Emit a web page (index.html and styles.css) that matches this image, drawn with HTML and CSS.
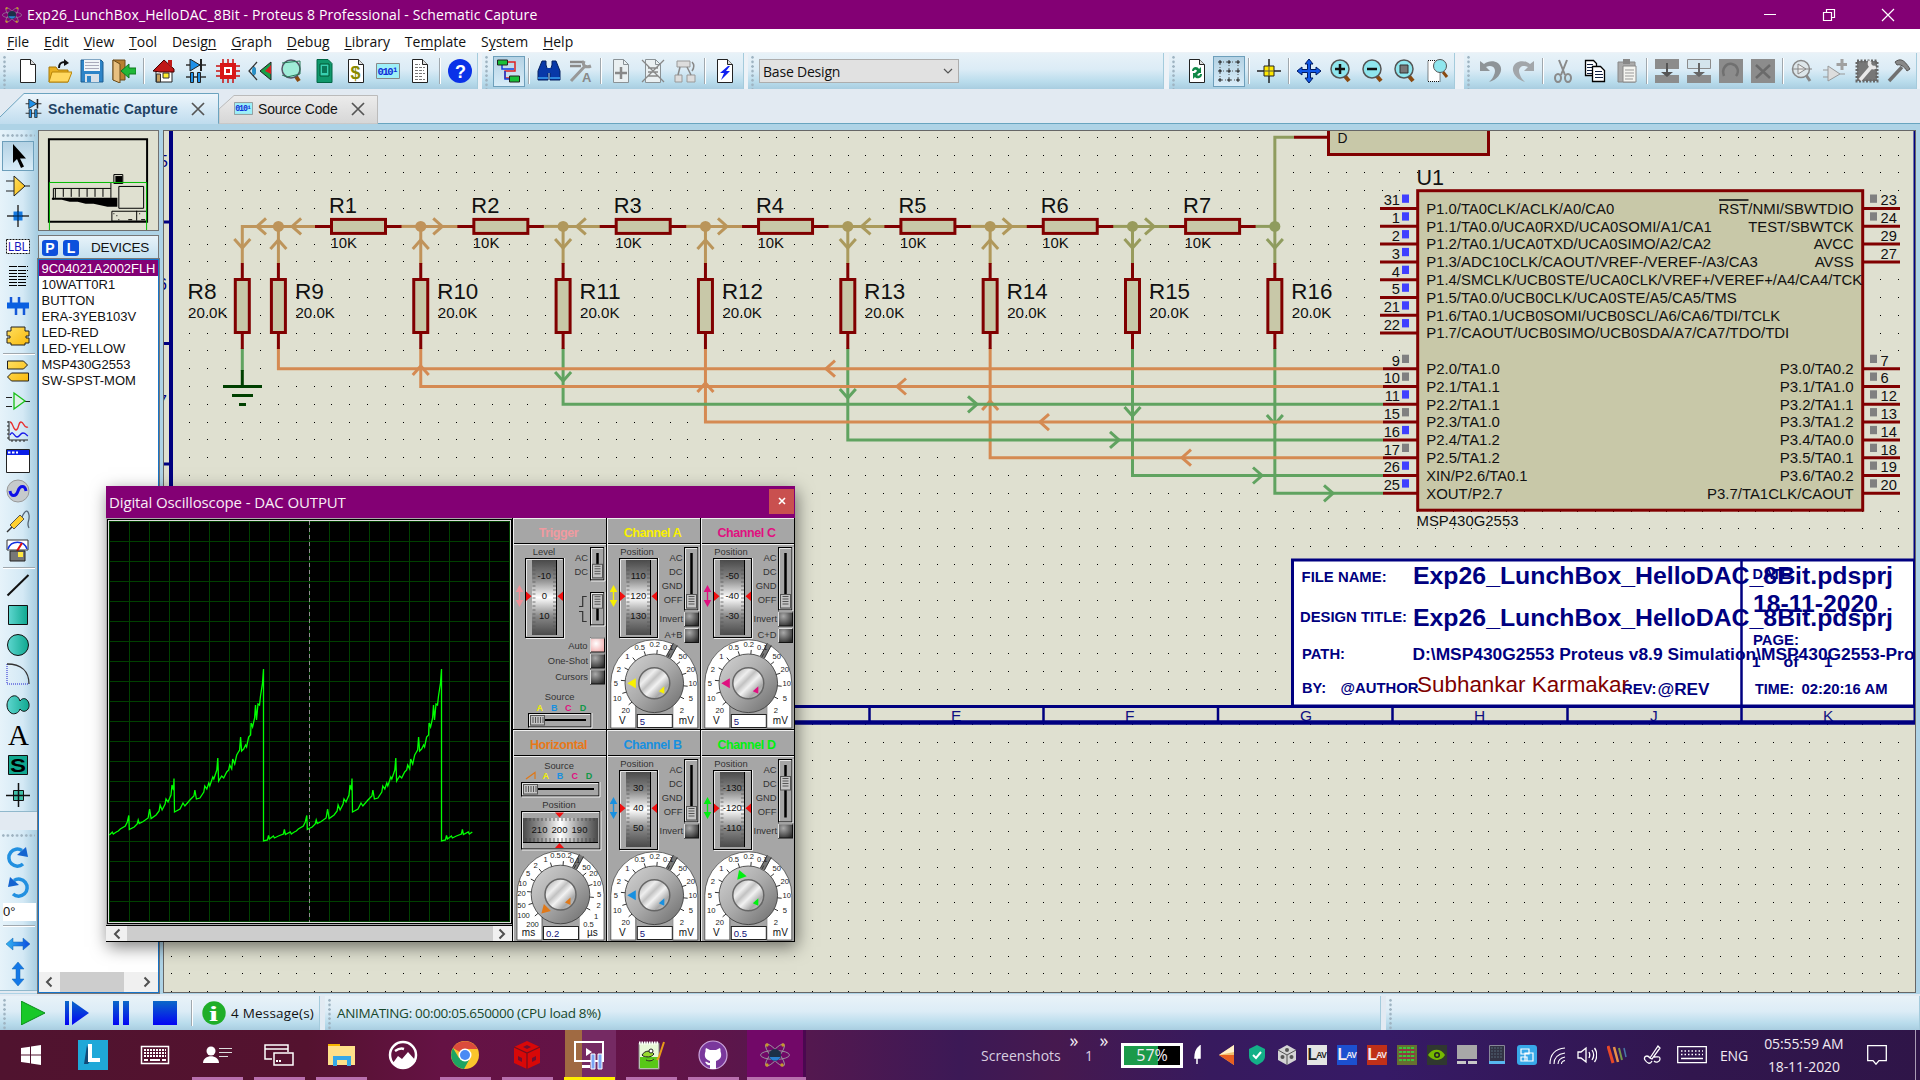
FILE: index.html
```html
<!DOCTYPE html>
<html lang="en">
<head>
<meta charset="utf-8">
<title>Exp26_LunchBox_HelloDAC_8Bit - Proteus 8 Professional - Schematic Capture</title>
<link rel="stylesheet" href="styles.css">
</head>
<body>
<svg class="defs" width="0" height="0">
  <defs>
    <linearGradient id="teal" x1="0" x2="1"><stop offset="0" stop-color="#5ed6cf"/><stop offset="1" stop-color="#0fa890"/></linearGradient>
    <linearGradient id="gold" x1="0" y1="0" x2="1" y2="1"><stop offset="0" stop-color="#ffdf60"/><stop offset="1" stop-color="#f8b90c"/></linearGradient>
    <linearGradient id="blueV" x1="0" y1="0" x2="0" y2="1"><stop offset="0" stop-color="#0a68c8"/><stop offset="1" stop-color="#0404f4"/></linearGradient>
    <linearGradient id="blueH"><stop offset="0" stop-color="#35b4f0"/><stop offset="1" stop-color="#0a4be0"/></linearGradient>
    <linearGradient id="drumV" x1="0" y1="0" x2="0" y2="1"><stop offset="0" stop-color="#4a4a4a"/><stop offset=".25" stop-color="#888"/><stop offset=".5" stop-color="#fff"/><stop offset=".75" stop-color="#888"/><stop offset="1" stop-color="#4a4a4a"/></linearGradient>
    <linearGradient id="drumH"><stop offset="0" stop-color="#4a4a4a"/><stop offset=".25" stop-color="#999"/><stop offset=".5" stop-color="#fff"/><stop offset=".75" stop-color="#999"/><stop offset="1" stop-color="#4a4a4a"/></linearGradient>
    <linearGradient id="knob" x1="0" y1="0" x2="1" y2="1"><stop offset="0" stop-color="#d4d4d4"/><stop offset=".5" stop-color="#a9a9a9"/><stop offset="1" stop-color="#6a6a6a"/></linearGradient>
    <linearGradient id="cap" x1="0" y1="0" x2="1" y2="1"><stop offset="0" stop-color="#999"/><stop offset=".3" stop-color="#eee"/><stop offset=".42" stop-color="#c2c2c2"/><stop offset=".55" stop-color="#f2f2f2"/><stop offset=".75" stop-color="#a8a8a8"/><stop offset="1" stop-color="#d8d8d8"/></linearGradient>
    <radialGradient id="btn" cx=".35" cy=".3" r=".8"><stop offset="0" stop-color="#aaa"/><stop offset="1" stop-color="#2a2a2a"/></radialGradient>
    <radialGradient id="btnOn" cx=".4" cy=".4" r=".8"><stop offset="0" stop-color="#fff"/><stop offset="1" stop-color="#eea0a0"/></radialGradient>
    <symbol id="page" viewBox="0 0 24 24"><path d="M4.500.500h10l5 5v18h-15z" fill="#fff" stroke="#222"/><path d="M14.500.500v5h5" fill="#ddd" stroke="#222"/></symbol>
    <symbol id="gpage" viewBox="0 0 24 24"><path d="M4.500.500h10l5 5v18h-15z" fill="#eaf0f2" stroke="#8a9296"/><path d="M14.500.500v5h5" fill="none" stroke="#8a9296"/></symbol>
    <symbol id="lens" viewBox="0 0 24 24"><path d="M15 16l5 6" stroke="#8a4a10" stroke-width="4"/><circle cx="11" cy="10" r="9" fill="#8fe6ee" stroke="#555" stroke-width="1.500"/></symbol>
    <symbol id="diode" viewBox="0 0 24 24"><path d="M2 6h20M2 18h20" stroke="#333" stroke-width="1.500"/><path d="M6 0v12l10-6z" fill="#1e90e8" stroke="#222"/><path d="M17 0v12" stroke="#222" stroke-width="2"/><path d="M6.500 13.500h3v10h-3zM13.500 13.500h3v10h-3z" fill="#1e90e8" stroke="#222"/></symbol>
    <symbol id="code" viewBox="0 0 24 24"><path d="M.500 4.500h23v15h-23z" fill="#9deff8" stroke="#888"/><text x="1.500" y="15.500" font-family="Liberation Mono" font-weight="700" font-size="10.500" fill="#1030d8" textLength="21">010¹</text></symbol>
    <symbol id="atom" viewBox="0 0 30 30"><g fill="none" stroke="#9a9aa0" stroke-width=".900"><ellipse cx="15" cy="15" rx="14.500" ry="4.500"/><ellipse cx="15" cy="15" rx="14" ry="4" transform="rotate(50 15 15)"/><ellipse cx="15" cy="15" rx="14" ry="4" transform="rotate(-50 15 15)"/></g><circle cx="15" cy="15" r="6" fill="#1c3048"/><path d="M9.500 17a6 6 0 0 0 11 0z" fill="#2a80d0"/><g fill="#c8962a"><circle cx="7" cy="5" r="1.700"/><circle cx="23" cy="5" r="1.700"/><circle cx="7" cy="25" r="1.700"/><circle cx="22" cy="25" r="1.700"/></g></symbol>
  </defs>
</svg>

<div class="app">
  <header class="titlebar">
    <svg class="appicon" viewBox="0 0 30 30"><use href="#atom"/></svg>
    <h1>Exp26_LunchBox_HelloDAC_8Bit - Proteus 8 Professional - Schematic Capture</h1>
    <div class="winbtns">
      <svg viewBox="0 0 14 14"><path d="M1 6.500h12" stroke="#fff"/></svg>
      <svg viewBox="0 0 14 14"><path d="M1.500 4.500h8v8h-8zM4.500 4.500v-3h8v8h-3" fill="none" stroke="#fff" stroke-width="1.200"/></svg>
      <svg viewBox="0 0 14 14"><path d="M1 1l12 12M13 1l-12 12" stroke="#fff" stroke-width="1.200"/></svg>
    </div>
  </header>

  <nav class="menubar">
    <span><u>F</u>ile</span><span><u>E</u>dit</span><span><u>V</u>iew</span><span><u>T</u>ool</span><span>Desig<u>n</u></span><span><u>G</u>raph</span><span><u>D</u>ebug</span><span><u>L</u>ibrary</span><span>Te<u>m</u>plate</span><span>S<u>y</u>stem</span><span><u>H</u>elp</span>
  </nav>

  <div class="toolbar">
    <div class="group g1">
      <i><svg viewBox="0 0 24 24"><use href="#page"/></svg></i>
      <i><svg viewBox="0 0 24 24"><path d="M1 23V8h7l2 3h10v12z" fill="#e8b020" stroke="#a87808"/><path d="M1 23l3-10h20l-4 10z" fill="#ffd860" stroke="#b88408"/><path d="M11 9c0-5 2-6 6-6" fill="none" stroke="#111" stroke-width="2"/><path d="M16 0l5 4-5 3z" fill="#111"/></svg></i>
      <i><svg viewBox="0 0 24 24"><path d="M1 1h20l2 2v20H1z" fill="#2d84c8" stroke="#1c5c90"/><path d="M4 1h16v11H4z" fill="#f0f4f8"/><path d="M5 3.500h14M5 6.500h14M5 9.500h14" stroke="#aab"/><path d="M5 15h14v8H5z" fill="#d8e0e8"/><path d="M7 17h4v6H7z" fill="#2d84c8"/></svg></i>
      <i><svg viewBox="0 0 24 24"><path d="M1 1h12v20H1z" fill="#b88030" stroke="#6a4a18"/><path d="M1 1l7 4v19l-7-3z" fill="#e8c080" stroke="#6a4a18"/><path d="M24 9h-7V5l-8 7 8 7v-4h7z" fill="#20b838" stroke="#107820"/></svg></i>
      <b></b>
      <i><svg viewBox="0 0 24 24"><path d="M4 12v11h16V10z" fill="#fff" stroke="#222"/><path d="M1 12L12 1l10 9v3h-14z" fill="#c01818" stroke="#400"/><path d="M16 1h4v7l-4-3z" fill="#c01818"/><path d="M4.500 15h4v8h-4z" fill="#c8a060" stroke="#333"/><path d="M11 14h6v5h-6z" fill="#ffee30" stroke="#333"/></svg></i>
      <i><svg viewBox="0 0 24 24"><use href="#diode"/></svg></i>
      <i><svg viewBox="0 0 24 24"><path d="M7 0v24M12 0v24M17 0v24M0 7h24M0 12h24M0 17h24" stroke="#c81010" stroke-width="1.500"/><path d="M4 4h16v16H4z" fill="#d81818"/><path d="M8 8h8v8H8z" fill="#fff"/><path d="M10 10h4v4h-4z" fill="#d81818"/></svg></i>
      <i><svg viewBox="0 0 24 24"><path d="M12 12L23 3v18z" fill="#18a048" stroke="#222"/><path d="M17 12l6-6v9z" fill="#d82020"/><path d="M9 3L1 12l8 9M5 7c3 2 3 8 0 10" fill="none" stroke="#333" stroke-width="1.300"/><ellipse cx="6" cy="12" rx="2" ry="4" fill="#2890c8"/></svg></i>
      <i><svg viewBox="0 0 24 24"><path d="M15 16l4 6" stroke="#8a4a10" stroke-width="4"/><circle cx="11" cy="10" r="9" fill="#a0ecd8" stroke="#556" stroke-width="1.500"/><path d="M2 4l18-2M2 16l5 2 13-3M20 2v13" fill="none" stroke="#287858"/></svg></i>
      <i><svg viewBox="0 0 24 24"><path d="M5 .500h11l4 4v19H5z" fill="#10986c" stroke="#064"/><path d="M8 5h9v12H8z" fill="#38d0b0" stroke="#053"/><path d="M10 7h5v7h-5z" fill="#0a7858"/></svg></i>
      <i><svg viewBox="0 0 24 24"><use href="#page"/><text x="6.500" y="20" font-family="Liberation Sans" font-weight="700" font-size="18" fill="#8a8a00">$</text></svg></i>
      <i><svg viewBox="0 0 24 24"><use href="#code"/></svg></i>
      <i><svg viewBox="0 0 24 24"><use href="#page"/><path d="M7 5.500h5M7 8.500h10M7 11.500h9M7 14.500h10M7 17.500h8M7 20.500h10" stroke="#777" stroke-dasharray="3 1"/></svg></i>
      <b></b>
      <i><svg viewBox="0 0 24 24"><circle cx="12" cy="12" r="12" fill="#0b32e8"/><text x="7" y="18.500" font-family="Liberation Sans" font-weight="700" font-size="18" fill="#fff">?</text></svg></i>
    </div>
    <div class="group g2">
      <i class="on"><svg viewBox="0 0 24 24"><path d="M11 3h7v9H8v7h5" fill="none" stroke="#e02020" stroke-width="1.500"/><path d="M5 6v4h12M8 12v8h5" fill="none" stroke="#1040e0" stroke-width="1.500"/><path d="M.500 1h10v5H.500zM12.500 17h10v6h-10z" fill="#18c038" stroke="#222"/></svg></i>
      <b></b>
      <i><svg viewBox="0 0 24 24"><path d="M5 2h4v4l2 6v9H1V12zM15 2h4l4 10v9H13v-9l2-6z" fill="#0838a8" stroke="#042060"/><path d="M10 9h4v5h-4z" fill="#0838a8"/><path d="M1 19h10M13 19h10" stroke="#38a0f0" stroke-width="1.500"/></svg></i>
      <i><svg viewBox="0 0 24 24"><path d="M1 3h14M1 7h11" stroke="#8a8a8a" stroke-width="2.500"/><path d="M2 22L17 6M15 2c-2 5 2 7 7 5" fill="none" stroke="#989898" stroke-width="3"/><text x="13" y="23" font-family="Liberation Sans" font-weight="700" font-size="13" fill="#888">A</text></svg></i>
      <b></b>
      <i><svg viewBox="0 0 24 24"><use href="#gpage"/><path d="M12 8v12M6 14h12" stroke="#888" stroke-width="2.500"/></svg></i>
      <i><svg viewBox="0 0 24 24"><use href="#gpage"/><path d="M7 9h10M7 13h10M7 17h10M1 1l22 22M23 1L1 23" stroke="#888" stroke-width="1.300"/></svg></i>
      <i><svg viewBox="0 0 24 24"><path d="M4 2h13v6H4zM2 16h7v7H2zM14 16h8v7h-8z" fill="#ddd" stroke="#999"/><path d="M7 8l-2 8M14 8l4 8M19 3c3 3 2 6 0 9" fill="none" stroke="#888" stroke-width="1.500"/></svg></i>
      <b></b>
      <i><svg viewBox="0 0 24 24"><use href="#page"/><path d="M15 7l-8 7h4l-3 7 9-9h-4l4-5z" fill="#1020f0"/></svg></i>
    </div>
    <div class="group g3"><div class="select">Base Design<svg viewBox="0 0 10 6"><path d="M1 1l4 4 4-4" fill="none" stroke="#555" stroke-width="1.200"/></svg></div></div>
    <div class="group g4">
      <i><svg viewBox="0 0 24 24"><use href="#page"/><path d="M7 12c0-5 6-5 7-2l2-2v6h-6l2-2c-1-2-3-1-3 0zM17 15c0 5-6 5-7 3l-2 2v-6h6l-2 2c1 1 3 1 3-1z" fill="#108848"/></svg></i>
      <i class="on"><svg viewBox="0 0 24 24"><path d="M3 3h18v18H3zM12 3v18M3 12h18" fill="none" stroke="#555" stroke-dasharray="1 2"/><path d="M1 3h4M3 1v4M10 3h4M12 1v4M19 3h4M21 1v4M1 12h4M3 10v4M10 12h4M12 10v4M19 12h4M21 10v4M1 21h4M3 19v4M10 21h4M12 19v4M19 21h4M21 19v4" stroke="#222"/></svg></i>
      <b></b>
      <i><svg viewBox="0 0 24 24"><path d="M12 0v24M0 12h24" stroke="#222" stroke-width="1.500"/><path d="M7 7h10v10H7z" fill="#ffe800" stroke="#222"/><path d="M12 7v10M7 12h10" stroke="#554"/></svg></i>
      <b></b>
      <i><svg viewBox="0 0 24 24"><path d="M12 0l4 5h-2.500v5.500H19V8l5 4-5 4v-2.500h-5.500V19H16l-4 5-4-5h2.500v-5.500H5V16l-5-4 5-4v2.500h5.500V5H8z" fill="#1058e8" stroke="#001a60"/></svg></i>
      <i><svg viewBox="0 0 24 24"><use href="#lens"/><path d="M11 5v10M6 10h10" stroke="#111" stroke-width="2.500"/></svg></i>
      <i><svg viewBox="0 0 24 24"><use href="#lens"/><path d="M6 10h10" stroke="#111" stroke-width="2.500"/></svg></i>
      <i><svg viewBox="0 0 24 24"><use href="#lens"/><path d="M7 6h8v8H7z" fill="#777" stroke="#333"/></svg></i>
      <i><svg viewBox="0 0 24 24"><path d="M3 1.500h12v21H3z" fill="#fff" stroke="#111" stroke-dasharray="1 1"/><path d="M18 13l4 5" stroke="#8a4a10" stroke-width="3"/><circle cx="15" cy="7" r="6.500" fill="#8fe6ee" stroke="#555"/></svg></i>
    </div>
    <div class="group g5">
      <i><svg viewBox="0 0 24 24"><path d="M1 2v10h10L7 8c7-3 11 2 8 8-1 3-3 5-5 7 8-2 13-9 12-14C21 2 11 0 5 5z" fill="#8e9498"/></svg></i>
      <i><svg viewBox="0 0 24 24"><path d="M23 2v10H13l4-4c-7-3-11 2-8 8 1 3 3 5 5 7C6 21 1 14 2 9 3 2 13 0 19 5z" fill="#a2a6aa"/></svg></i>
      <b></b>
      <i><svg viewBox="0 0 24 24"><path d="M8 1l6 15M16 1l-6 15" stroke="#8a8a8a" stroke-width="2"/><g fill="none" stroke="#8a8a8a" stroke-width="2"><ellipse cx="7" cy="19" rx="3" ry="4"/><ellipse cx="17" cy="19" rx="3" ry="4"/></g></svg></i>
      <i><svg viewBox="0 0 24 24"><path d="M2.500 1.500h8l3 3v12h-11z" fill="#fff" stroke="#000" stroke-width="1.300"/><path d="M4 5.500h6M4 8.500h5M4 11.500h5M4 14.500h5" stroke="#124"/><path d="M9.500 7.500h8l4 4v11h-12z" fill="#fff" stroke="#000" stroke-width="1.300"/><path d="M12 12.500h7M12 15.500h8M12 18.500h8" stroke="#124"/></svg></i>
      <i><svg viewBox="0 0 24 24"><path d="M3 3h17v20H3z" fill="#aaa" stroke="#888"/><path d="M8 0h7v5H8z" fill="#888"/><path d="M8 7h13v16H8z" fill="#f4f4f0" stroke="#888"/><path d="M10 11h9M10 14h9M10 17h9M10 20h8" stroke="#999"/></svg></i>
      <b></b>
      <i><svg viewBox="0 0 24 24"><path d="M0 0h24v10H0zM0 16h24v8H0z" fill="#8c8c8c"/><path d="M11 4h2v9h5l-6 5-6-5h5z" fill="#555"/></svg></i>
      <i><svg viewBox="0 0 24 24"><path d="M.500.500h23v9H.500z" fill="#d4e4ec" stroke="#8c8c8c"/><path d="M0 16h24v8H0z" fill="#8c8c8c"/><path d="M11 4h2v9h5l-6 5-6-5h5z" fill="#666"/></svg></i>
      <i><svg viewBox="0 0 24 24"><path d="M0 0h24v24H0z" fill="#8c8c8c"/><path d="M5 17c-3-8 3-13 8-12s8 7 4 12" fill="none" stroke="#707070" stroke-width="2.500"/></svg></i>
      <i><svg viewBox="0 0 24 24"><path d="M0 0h24v24H0z" fill="#8c8c8c"/><path d="M5 6l14 13M19 6L5 19" stroke="#6a6a6a" stroke-width="2.500"/></svg></i>
      <b></b>
      <i><svg viewBox="0 0 24 24"><path d="M15 16l4 6" stroke="#888" stroke-width="3"/><circle cx="10" cy="10" r="8.500" fill="#dde6ea" stroke="#888" stroke-width="1.500"/><path d="M7 5v10l8-5zM1 10h20" fill="#eee" stroke="#888"/></svg></i>
      <i><svg viewBox="0 0 24 24"><path d="M5 7v15l12-7zM0 11h5M0 18h5M17 15h5" fill="#ddd" stroke="#999"/><path d="M19 0v11M13.500 5.500h11" stroke="#a0a0a0" stroke-width="3"/></svg></i>
      <i><svg viewBox="0 0 24 24"><path d="M2 2h20v20H2z" fill="#777" stroke="#666" stroke-width="3" stroke-dasharray="2 1.500"/><path d="M5 21L17 7M15 2c-2 4 2 8 6 6" fill="none" stroke="#e8e8e8" stroke-width="3.500"/></svg></i>
      <i><svg viewBox="0 0 24 24"><path d="M2 22L15 8" stroke="#707070" stroke-width="3.500"/><path d="M8 3c5-4 9-3 15 7l-3 2c-3-5-7-7-10-6z" fill="#888" stroke="#555"/></svg></i>
    </div>
  </div>

  <div class="tabs">
    <svg class="tabshape" viewBox="0 0 380 35"><defs><linearGradient id="ta" x1="0" y1="0" x2="0" y2="1"><stop offset="0" stop-color="#eef6fc"/><stop offset="1" stop-color="#bfdcee"/></linearGradient><linearGradient id="tg" x1="0" y1="0" x2="0" y2="1"><stop offset="0" stop-color="#ececec"/><stop offset="1" stop-color="#d6d6d6"/></linearGradient></defs><path d="M219 20L234 6.500H377.500V35H219z" fill="url(#tg)" stroke="#bbb"/><path d="M-1 29L24 4.500H218.500V35H-1z" fill="url(#ta)"/><path d="M-1 29L24 4.500H218.500V34.500" fill="none" stroke="#6ba3bf"/></svg>
    <div class="tab active"><svg viewBox="0 0 24 24"><use href="#diode"/></svg><span>Schematic Capture</span><svg class="x" viewBox="0 0 14 14"><path d="M1 1l12 12M13 1L1 13" stroke="#555" stroke-width="1.700"/></svg></div>
    <div class="tab"><svg viewBox="0 0 24 24"><use href="#code"/></svg><span>Source Code</span><svg class="x" viewBox="0 0 14 14"><path d="M1 1l12 12M13 1L1 13" stroke="#555" stroke-width="1.700"/></svg></div>
  </div>

  <main>
    <aside class="modes">
      <div class="modegroup">
        <i class="on"><svg viewBox="0 0 24 24"><path d="M7 0v19l4-4 4 9 3-1.500-4-8h6z" fill="#000"/></svg></i>
        <i><svg viewBox="0 0 24 24"><path d="M0 7h8M0 17h8M18 12h6" stroke="#222"/><path d="M8 2v20l11-10z" fill="url(#gold)" stroke="#222"/></svg></i>
        <i><svg viewBox="0 0 24 24"><path d="M12 1v22M1 12h22" stroke="#333" stroke-width="1.500"/><path d="M7.500 7.500h9v9h-9z" fill="#1478e0"/><path d="M12 7v10M7 12h10" stroke="#024"/></svg></i>
        <i><svg viewBox="0 0 24 24"><path d="M.500 5.500h23v14H.500z" fill="#fff" stroke="#111" stroke-dasharray="2 1"/><text x="2" y="17" font-family="Liberation Sans" font-size="12" textLength="20" lengthAdjust="spacingAndGlyphs" fill="#1414c0">LBL</text></svg></i>
        <i><svg viewBox="0 0 24 24"><path d="M3 2.500h19M3 6.500h19M3 9.500h18M3 12.500h19M3 15.500h18M3 18.500h18M3 21.500h18" stroke="#000" stroke-dasharray="8 1"/></svg></i>
        <i><svg viewBox="0 0 24 24"><path d="M5 3v9M13 3v9M10 12v9M18 12v9" stroke="#1458d8" stroke-width="2.500"/><path d="M1 8.500h22v6H1z" fill="#0a60e0"/></svg></i>
        <i><svg viewBox="0 0 24 24"><path d="M5 3h14v4h4v5h-3v2h3v5h-4v2H5v-2H1v-5h3v-2H1V7h4z" fill="url(#gold)" stroke="#222"/></svg></i>
        <b></b>
        <i><svg viewBox="0 0 24 24"><path d="M1.500 2h16l4 4-4 4h-16zM22.500 14h-17l-4 4 4 4h17z" fill="url(#gold)" stroke="#222"/></svg></i>
        <i><svg viewBox="0 0 24 24"><path d="M0 8.500h6M0 17.500h6M18 12.500h6" stroke="#222"/><path d="M8 4v16l11-8z" fill="#dff0e8" stroke="#18c018" stroke-width="1.300"/></svg></i>
        <i><svg viewBox="0 0 24 24"><path d="M3 2v19h19M1 3h2M1 7h2M1 11h2M1 15h2M1 19h2M6 21v2M10 21v2M14 21v2M18 21v2" fill="none" stroke="#222"/><path d="M4 3c3 0 3 8 6 8s2-8 5-8 3 7 7 5" fill="none" stroke="#e83030" stroke-width="1.300"/><path d="M4 16c3-6 4 2 7 2s3-4 6-4 3 2 5 3" fill="none" stroke="#1818e8" stroke-width="1.300"/></svg></i>
        <i><svg viewBox="0 0 24 24"><path d="M.500.500h23v23H.500z" fill="#fff" stroke="#222"/><path d="M1 1h22v5H1z" fill="#0a1ee8"/><path d="M2 3.500h10" stroke="#fff" stroke-width="2" stroke-dasharray="2.500 1.500"/></svg></i>
        <i><svg viewBox="0 0 24 24"><circle cx="12" cy="12" r="11" fill="#c6cacc" stroke="#999"/><path d="M4 12c1 6 6 6 8 0s7-6 8 0" fill="none" stroke="#1010e8" stroke-width="3"/></svg></i>
        <i><svg viewBox="0 0 24 24"><path d="M1 23l5-5" stroke="#333" stroke-width="1.500"/><path d="M4 16L14 6l4 4L8 20z" fill="#ffd030" stroke="#555"/><path d="M16 8c3-7 6-8 7-2s-3 8 0 13" fill="none" stroke="#567" stroke-width="1.300"/></svg></i>
        <i><svg viewBox="0 0 24 24"><path d="M1 1h21v10H1z" fill="#fff" stroke="#333"/><path d="M2 10c3-9 16-9 19 0" fill="none" stroke="#1030e0" stroke-width="1.500"/><path d="M11 12l5-8" stroke="#e01010" stroke-width="2"/><path d="M4 12h15v10H4z" fill="#777" stroke="#222"/><path d="M12 13h5v5h-5z" fill="#ffe840"/></svg></i>
        <b class="tight"></b>
        <i><svg viewBox="0 0 24 24"><path d="M1.500 22.500L22.500 2" stroke="#111" stroke-width="2"/></svg></i>
        <i><svg viewBox="0 0 24 24"><path d="M2.500 2.500h19v19h-19z" fill="url(#teal)" stroke="#111"/></svg></i>
        <i><svg viewBox="0 0 24 24"><circle cx="12" cy="12" r="10.500" fill="url(#teal)" stroke="#111"/></svg></i>
        <i><svg viewBox="0 0 24 24"><path d="M1 1v20h22" fill="none" stroke="#2020d0" stroke-dasharray="1 1"/><path d="M1 1c14 0 22 7 22 20" fill="none" stroke="#333" stroke-width="1.300"/></svg></i>
        <i><svg viewBox="0 0 24 24"><path d="M14 8c2-3 5-3 7-1s3 6 1 9-6 3-8 0c-1 4-6 6-9 4s-4-5-4-8 2-8 6-9 6 2 7 5z" fill="url(#teal)" stroke="#111"/></svg></i>
        <i><svg viewBox="0 0 24 24"><text x="2" y="21.500" font-family="Liberation Serif" font-size="29">A</text></svg></i>
        <i><svg viewBox="0 0 24 24"><path d="M2.500 2.500h19v19h-19z" fill="#10a890" stroke="#111"/><text x="4" y="18.700" font-family="Liberation Sans" font-weight="700" font-size="19" textLength="16" lengthAdjust="spacingAndGlyphs">S</text></svg></i>
        <i><svg viewBox="0 0 24 24"><path d="M7.500 7.500h10v10h-10z" fill="#40c0a8" stroke="#111"/><path d="M12.500 0v24M0 12.500h24" stroke="#111" stroke-width="1.500"/></svg></i>
      </div>
      <div class="modegroup rot">
        <i><svg viewBox="0 0 24 24"><path d="M16 4.500A8.500 8.500 0 1 0 17 18" fill="none" stroke="#2290e0" stroke-width="3.500"/><path d="M11 9L20 1l2 10z" fill="#1464d0"/></svg></i>
        <i><svg viewBox="0 0 24 24"><path d="M8 4.500A8.500 8.500 0 1 1 7 18" fill="none" stroke="#2290e0" stroke-width="3.500"/><path d="M13 9L4 1 2 11z" fill="#1464d0"/></svg></i>
        <div class="angle">0°</div>
        <b></b>
        <i><svg viewBox="0 0 24 24"><path d="M0 12l7-6v4h10V6l7 6-7 6v-4H7v4z" fill="url(#blueH)" stroke="#1468b0" stroke-width=".500"/></svg></i>
        <i><svg viewBox="0 0 24 24"><path d="M12 0l6 7h-4v10h4l-6 7-6-7h4V7H6z" fill="#1478e8" stroke="#1468b0" stroke-width=".500"/></svg></i>
      </div>
    </aside>

    <section class="library">
      <svg class="preview" viewBox="39 131 120 99">
        <path d="M49 139h99v83H49z" fill="none" stroke="#000" stroke-width="2"/>
        <path d="M53.500 200V188.500h58M55.500 189v9M63.500 189v8M71.500 189v8M79.500 189v8M87.500 189v8M95.500 189v8M103.500 189v8M111.500 183v15" stroke="#000" fill="none"/>
        <path d="M52 198h66v2H52zM62 200h56v2H70zM78 202h40v2H86zM94 204h24v3h-10z" fill="#000"/>
        <path d="M114.500 174.500h9v9h-9z" fill="#dfe0d0" stroke="#000"/><path d="M116 176h7v6h-7z"/>
        <path d="M119.500 186.500h25v22h-25zM112.500 211.500h35v10h-35zM137.500 211v10" fill="none" stroke="#000"/>
        <path d="M114 214h1M117 216h1M119 220h1M129 220h4M140 214h1M142 220h4" stroke="#000"/>
        <path d="M49.500 231V182.500h98V231" fill="none" stroke="#0b0"/>
      </svg>
      <div class="devhead"><em>P</em><em>L</em><span>DEVICES</span></div>
      <div class="devlist">
        <ul><li class="sel">9C04021A2002FLH</li><li>10WATT0R1</li><li>BUTTON</li><li>ERA-3YEB103V</li><li>LED-RED</li><li>LED-YELLOW</li><li>MSP430G2553</li><li>SW-SPST-MOM</li></ul>
        <div class="hscroll"><svg viewBox="0 0 8 12"><path d="M6.500 1.500L2 6l4.500 4.500"/></svg><span class="thumb"></span><svg viewBox="0 0 8 12"><path d="M1.500 1.500L6 6l-4.500 4.500"/></svg></div>
      </div>
    </section>

    <svg id="sheet" viewBox="163 130 1753 863"></svg>
  </main>

  <div class="simbar">
    <div class="group s1">
      <svg viewBox="0 0 24 24"><path d="M0 0l24 12L0 24z" fill="#18c828" stroke="#0a8a18"/></svg>
      <svg viewBox="0 0 24 24"><path d="M0 0h4v24H0zM7 0l17 12L7 24z" fill="url(#blueV)"/></svg>
      <svg viewBox="0 0 24 24"><path d="M4 0h6v24H4zM14 0h6v24h-6z" fill="url(#blueV)"/></svg>
      <svg viewBox="0 0 24 24"><path d="M0 0h24v24H0z" fill="url(#blueV)"/></svg>
      <b></b>
      <svg class="info" viewBox="0 0 24 24"><circle cx="12" cy="12" r="11.700" fill="#1fae28"/><text x="7" y="20" font-family="Liberation Serif" font-weight="700" font-size="22" textLength="9" lengthAdjust="spacingAndGlyphs" fill="#fff">i</text></svg>
      <span>4 Message(s)</span>
    </div>
    <div class="group s2"><span>ANIMATING: 00:00:05.650000 (CPU load 8%)</span></div>
    <div class="group s3"></div>
  </div>

  <footer class="taskbar">
    <div class="apps">
      <i><svg viewBox="0 0 20 20"><path d="M0 3l9-1.300v7.800H0zM10 1.500L20 0v9.500H10zM0 10.500h9v7.800L0 17zM10 10.500h10V20l-10-1.500z" fill="#fff"/></svg></i>
      <i><svg class="w30" viewBox="0 0 30 30"><path d="M0 0h30v30H0z" fill="#1fa8d8"/><path d="M9 5L6 24h4l3-4z" fill="#124a78"/><path d="M10 4v18h12v-4h-8V4z" fill="#fff"/></svg></i>
      <i><svg class="w30" viewBox="0 0 30 30"><path d="M1.500 6.500h27v17h-27z" fill="none" stroke="#fff" stroke-width="1.500"/><path d="M4 10h22M4 13h22M4 16h22" stroke="#fff" stroke-width="2" stroke-dasharray="2 1"/><path d="M4 20h4M10 20h10M22 20h4" stroke="#fff" stroke-width="2"/></svg></i>
      <i class="run"><svg class="w30" viewBox="0 0 30 30"><circle cx="9" cy="11" r="4.500" fill="#fff"/><path d="M1 23c0-9 16-9 16 0z" fill="#fff"/><path d="M17 8.500h13M17 12.500h13M17 16.500h9" stroke="#ddd"/></svg></i>
      <i class="run"><svg class="w30" viewBox="0 0 30 30"><path d="M8 19H1V5h23v7M1 9h23M10 13h19v12H10z" fill="none" stroke="#fff" stroke-width="1.500"/><path d="M12 21h5" stroke="#fff" stroke-dasharray="2 1" stroke-width="2"/></svg></i>
      <i class="run"><svg class="w30" viewBox="0 0 30 30"><path d="M2 4h12v4H2z" fill="#f5b301"/><path d="M2 6h27v19H2z" fill="#ffe08a"/><path d="M7 26V16h18v10h-4v-6H11v6z" fill="#36a8e8"/></svg></i>
      <i><svg class="w30" viewBox="0 0 30 30"><circle cx="15" cy="15" r="13" fill="none" stroke="#fff" stroke-width="2.500"/><path d="M5 23l5-7 4 3 6-7 8 9-6 6H10z" fill="#fff"/><path d="M7 11c3-2 6-3 9-2" stroke="#fff" stroke-width="2.500" fill="none"/></svg></i>
      <i class="run"><svg class="w28" viewBox="0 0 28 28"><circle cx="14" cy="14" r="14" fill="#fbc52c"/><path d="M14 14L1.900 7A14 14 0 0 1 26.500 8H14z" fill="#db4b3c"/><path d="M14 14l-6 3L2 7A14 14 0 0 0 13 28l5-9z" fill="#1da462"/><circle cx="14" cy="14" r="6.500" fill="#fff"/><circle cx="14" cy="14" r="5" fill="#4a8af4"/></svg></i>
      <i class="run"><svg class="w28" viewBox="0 0 28 28"><path d="M14 0l13 6v16l-13 6-13-6V6z" fill="#d80808"/><path d="M1 6l13 6 13-6M14 12v16" fill="none" stroke="#701020" stroke-width="1.200"/><path d="M10 6l4-2 4 2-4 2zM5 15l4 2v4l-4-2zM19 17l4-2v4l-4 2z" fill="#701030"/></svg></i>
      <i class="run cap"><svg class="w30" viewBox="0 0 30 30"><path d="M1 2h28v19H1z" fill="none" stroke="#fff" stroke-width="2"/><path d="M12 8v8l6-4zM8 25h8v3H8z" fill="#fff"/><path d="M17 14h4v15h-4zM24 14h4v15h-4z" fill="#7aa4f4" stroke="#fff"/></svg></i>
      <i class="run"><svg class="w30" viewBox="0 0 30 30"><path d="M3 3h20v26H3z" fill="#e8f8d8" stroke="#888"/><path d="M4 17h18v11H4z" fill="#58c818"/><path d="M3 3h20" stroke="#fff" stroke-width="3" stroke-dasharray="1.500 1"/><path d="M6 15c3-5 9-5 12-1-3 4-8 3-11 2zM10 20c4 2 7 0 8-1" fill="#98d830" stroke="#222"/><circle cx="15" cy="11" r="2" fill="#fff" stroke="#222"/><path d="M28 2l-5 15-2 3" stroke="#e89a18" stroke-width="2" fill="none"/></svg></i>
      <i class="run"><svg class="w30" viewBox="0 0 30 30"><circle cx="15" cy="15" r="14" fill="#7a389c" stroke="#cda8dd" stroke-width="1.200"/><path d="M8 8l4 2h6l4-2c1 2 0 3 1 5 1 5-2 7-5 8v8h-6v-4c-3 1-4-2-5-3 3-1 2 1 5 1v-2c-3-1-6-3-5-8 1-2 0-3 1-5z" fill="#fff"/></svg></i>
      <i class="run now"><svg class="w30" viewBox="0 0 30 30"><use href="#atom"/></svg></i>
    </div>
    <div class="tray">
      <span class="lbl t1">Screenshots</span><span class="chev">»</span><span class="lbl t2">1</span><span class="chev c2">»</span>
      <div class="battery"><span>57%</span></div>
      <i class="plug"><svg viewBox="0 0 20 20"><path d="M12 1c-4 3-5 7-5 12h5zM9 13v6" fill="#fff" stroke="#fff" stroke-width="1.500"/></svg></i>
      <i><svg viewBox="0 0 20 20"><path d="M2 10L17 0v20z" fill="#f0c070"/><path d="M2 10L17 0v7z" fill="#fff0c8"/><path d="M2 10l15 0v10z" fill="#e86020"/></svg></i>
      <i><svg viewBox="0 0 20 20"><path d="M10 0l8 4v7c0 5-4 7-8 9-4-2-8-4-8-9V4z" fill="#14b088"/><path d="M6 10l3 3 5-6" fill="none" stroke="#fff" stroke-width="2"/></svg></i>
      <i><svg viewBox="0 0 20 20"><path d="M10 0l9 5v10l-9 5-9-5V5z" fill="#d4d4d4"/><path d="M1 5l9 5 9-5M10 10v10" fill="none" stroke="#555"/><circle cx="10" cy="5" r="2" fill="#555"/><circle cx="5.500" cy="12" r="2" fill="#555"/><circle cx="14.500" cy="12" r="2" fill="#555"/></svg></i>
      <i class="lav a">L<small>AV</small></i><i class="lav b">L<small>AV</small></i><i class="lav c">L<small>AV</small></i>
      <i><svg viewBox="0 0 20 20"><path d="M0 0h20v20H0z" fill="#667030"/><path d="M2 3h16M2 7h16M2 11h16M2 15h16" stroke="#30e040" stroke-width="1.500" stroke-dasharray="3 1"/><path d="M2 5h16M2 9h16M2 13h16" stroke="#a02848" stroke-width="1.500"/></svg></i>
      <i><svg viewBox="0 0 20 20"><path d="M0 0h20v20H0z" fill="#303830"/><path d="M1 10c4-7 13-7 17 0-4 7-13 6-17 0z" fill="#76b900"/><circle cx="10" cy="10" r="3" fill="#222"/><circle cx="10" cy="10" r="1.500" fill="#76b900"/></svg></i>
      <i><svg viewBox="0 0 20 20"><path d="M0 0h20v14H0z" fill="#a8a8a8"/><path d="M0 16h9v3H0zM11 16h9v3h-9z" fill="#c8c8c8"/></svg></i>
      <i><svg viewBox="0 0 20 20"><path d="M2.500.500h15v16h-15z" fill="#334" stroke="#889"/><path d="M4 3h12M4 6h12M4 9h12M4 12h12" stroke="#567" stroke-dasharray="2 1"/><path d="M2 16h16v3H2z" fill="#58b8f0"/></svg></i>
      <i><svg viewBox="0 0 20 20"><rect width="20" height="20" rx="3" fill="#38a8e8"/><path d="M4 4h8v5H4zM8 8h8v8H8zM4 12h6v4H4z" fill="none" stroke="#fff" stroke-width="1.200"/></svg></i>
      <i><svg viewBox="0 0 20 20" fill="none" stroke="#fff"><path d="M3 19C3 9 8 4 18 3M7 19c0-6 4-10 11-11M11 19c0-4 2-6 7-7M14.500 19c0-2 1-3 3.500-3.500" stroke-width="1.100"/></svg></i>
      <i><svg viewBox="0 0 20 20" fill="none" stroke="#fff" stroke-width="1.300"><path d="M1 7h3l5-4v14l-5-4H1zM12 7c1 2 1 4 0 6M15 5c2 3 2 7 0 10M17.500 3c3 4 3 10 0 14"/></svg></i>
      <i><svg viewBox="0 0 20 20"><path d="M1 1l5 17" stroke="#e84828" stroke-width="3"/><path d="M7 2l4 15" stroke="#e89048" stroke-width="2.500"/><path d="M12 3l3 12" stroke="#789848" stroke-width="2"/><path d="M17 3l2 9" stroke="#4878a8" stroke-width="1.500"/></svg></i>
      <i class="pen"><svg viewBox="0 0 20 20" fill="none" stroke="#fff" stroke-width="1.300"><path d="M8 13l8-12 2 2-8 11zM8 13c-3-4-7-1-5 2s5 5 7 1M12 12c4 0 6-1 6 2s-4 4-6 2"/></svg></i>
      <i class="kbd"><svg viewBox="0 0 30 18"><path d="M.700.700h28.600v16H.700z" fill="none" stroke="#fff" stroke-width="1.300"/><path d="M4 5h22M4 8.500h22" stroke="#fff" stroke-width="1.500" stroke-dasharray="1.500 2"/><path d="M4 12.500h22" stroke="#fff" stroke-width="1.500"/></svg></i>
      <span class="eng">ENG</span>
      <div class="clock"><span>05:55:59 AM</span><span>18-11-2020</span></div>
      <i class="note"><svg viewBox="0 0 20 20"><path d="M.700.700h18.600v15H12l-3 3.500-3-3.500H.700z" fill="none" stroke="#fff" stroke-width="1.300"/></svg></i>
    </div>
  </footer>
</div>

<div class="scope">
  <div class="scopetitle"><span>Digital Oscilloscope - DAC OUTPUT</span><button><svg viewBox="0 0 8 8"><path d="M1 1l6 6M7 1L1 7" stroke="#fff" stroke-width="1.600"/></svg></button></div>
  <div class="scopebody">
    <div class="display">
      <svg id="trace" viewBox="106 518 406 407"></svg>
      <div class="hscroll"><svg viewBox="0 0 8 12"><path d="M6.500 1.500L2 6l4.500 4.500"/></svg><span class="thumb"></span><svg viewBox="0 0 8 12"><path d="M1.500 1.500L6 6l-4.500 4.500"/></svg></div>
    </div>
    <div class="modules" id="modules"></div>
  </div>
</div>
<script src="app.js"></script>
</body>
</html>
```
FILE: styles.css
```css
* { box-sizing: border-box; }
body { margin: 0; width: 1920px; height: 1080px; overflow: hidden; font-family: "Open Sans", "Noto Sans", sans-serif; font-size: 14px; color: #111; }
.defs { position: absolute; }
i, em { font-style: normal; }
svg { display: block; }

.app { display: grid; grid-template-rows: 29px 23px 37px 35px 870px 36px 50px; height: 1080px; background: #e2eaf2; }

.titlebar { display: flex; align-items: center; background: #830074; color: #fff; padding-left: 2px; }
.appicon { width: 20px; height: 24px; }
.titlebar h1 { margin: 0 0 0 5px; font-size: 14px; font-weight: 400; letter-spacing: .11px; white-space: nowrap; flex: 1; }
.winbtns { display: flex; gap: 45px; padding-right: 25px; }
.winbtns svg { width: 14px; height: 14px; }

.menubar { display: flex; align-items: center; gap: 14.8px; background: #fff; padding: 2px 0 0 7px; }
.menubar u { text-underline-offset: 2px; }

.toolbar { display: flex; background: #edf2f7; padding-top: 1px; }
.group { display: flex; align-items: center; background: linear-gradient(#e8f2f8, #dcecf6 45%, #b9dcec 80%, #a9cde0); border-right: 1px solid #a4cbdc; position: relative; }
.group::before { content: ""; width: 3px; align-self: stretch; margin: 2px 0 0 3px; background: radial-gradient(circle, #9fb4c2 1.1px, transparent 1.5px) 0 0 / 3px 4.6px; }
.group i { width: 32px; height: 32px; display: flex; align-items: center; justify-content: center; flex: none; }
.group i svg { width: 24px; height: 24px; }
.group .on { background: linear-gradient(#b4d2e4, #d8ecf8); border: 1px solid #6d9fbb; height: 31px; }
.group b, .modegroup b { flex: none; width: 2px; height: 26px; margin: 0 3px; background: #a0a8ae; border-right: 1px solid #fff; }
.g1 { width: 478px; margin-right: 4px; } .g1::before { margin-right: 6px; }
.g2 { width: 262px; margin-right: 4px; } .g2::before { margin-right: 5px; }
.g3 { width: 416px; margin-right: 5px; } .g3::before { margin-right: 5px; }
.g4 { width: 286px; margin-right: 9px; } .g4::before { margin-right: 6px; }
.g5 { width: 453px; } .g5::before { margin-right: 5px; }
.select { width: 200px; height: 24px; background: #e1e1e1; border: 1px solid #adadad; display: flex; align-items: center; justify-content: space-between; padding: 0 5px 0 3px; letter-spacing: -.2px; }
.select svg { width: 10px; height: 6px; }

.tabs { position: relative; display: flex; border-bottom: 1px solid #68a5c0; font-family: "Liberation Sans", sans-serif; }
.tabshape { position: absolute; left: 0; top: 0; width: 380px; height: 35px; }
.tab { position: relative; display: flex; align-items: center; padding-left: 25px; width: 219px; padding-top: 5px; }
.tab svg { width: 19px; height: 19px; margin-right: 5px; }
.tab .x { width: 14px; height: 14px; margin: 0 0 0 13px; }
.tab span { font-size: 14px; letter-spacing: -.2px; }
.active { padding-left: 24px; }
.tab.active span { font-weight: 700; color: #1f4263; letter-spacing: .18px; }
.tab + .tab { padding-left: 15px; }

main { display: grid; grid-template-columns: 38px 122px 3px 1753px; padding-top: 6px; background: #aed3e6; align-items: start; }
#sheet { grid-column: 4; width: 1753px; height: 863px; background: #dfe0d0; }

.modes { height: 863px; background: #e2eaf2; display: flex; flex-direction: column; justify-content: space-between; padding-bottom: 2px; }
.modegroup { background: linear-gradient(90deg, #e6f3fa, #d4e9f5 60%, #a5cce0); border-bottom: 1px solid #90b8cc; display: flex; flex-direction: column; align-items: flex-start; height: 682px; }
.modegroup::before { content: ""; width: 34px; height: 3px; margin: 4px 0 4px 1px; flex: none; background: radial-gradient(circle, #9fb4c2 1.1px, transparent 1.5px) 0 0 / 4.6px 3px; }
.modegroup i { width: 32px; height: 30px; margin-left: 2px; display: flex; align-items: center; justify-content: center; flex: none; }
.modegroup i svg { width: 24px; height: 24px; }
.modegroup .on { background: linear-gradient(#b4d2e4, #d8ecf8); border: 1px solid #6d9fbb; }
.modegroup b { width: 32px; height: 2px; margin: 1.5px 3px; border-right: 0; border-bottom: 1px solid #fff; }
.modegroup .tight { margin: 1px 3px; }
.rot { height: 161px; }
.rot::before { margin-bottom: 6px; }
.angle { width: 33px; height: 18px; margin-left: 3px; background: #fff; font: 13px/17px "Liberation Sans", sans-serif; }
.rot b { margin-top: 4px; }

.library { height: 863px; display: flex; flex-direction: column; width: 121px; }
.preview { width: 121px; height: 101px; background: #dfe0d0; border: 1px solid #707070; }
.devhead { margin-top: 4px; height: 24px; display: flex; align-items: center; background: linear-gradient(#e8f3fa, #c3dfee); border: 1px solid #777; border-bottom: 0; padding-left: 3px; font-family: "Liberation Sans", sans-serif; font-size: 13.5px; }
.devhead em { width: 16px; height: 16px; margin-right: 5px; background: #0d50dc; border-radius: 3px; color: #fff; font-weight: 700; font-size: 14px; line-height: 16px; text-align: center; }
.devhead span { margin-left: 7px; letter-spacing: -.15px; }
.devlist { flex: 1; background: #fff; border: 1px solid #1673c8; outline: 1px solid #777; display: flex; flex-direction: column; justify-content: space-between; }
.devlist ul { list-style: none; margin: 0; padding: 0; font: 13px/17px "Liberation Sans", sans-serif; }
.devlist li { padding-left: 2.5px; height: 16px; white-space: nowrap; }
.devlist .sel { background: #830074; color: #fff; letter-spacing: -.07px; }
.hscroll { display: flex; align-items: center; justify-content: space-between; height: 20px; background: #f0f0f0; padding: 0 7px 0 6px; }
.hscroll svg { width: 8px; height: 12px; fill: none; stroke: #505050; stroke-width: 2; }
.hscroll .thumb { background: #cdcdcd; align-self: stretch; width: 64px; margin-right: 12px; }

.simbar { display: flex; background: #e2eaf2; padding-top: 2px; }
.simbar .group { font-size: 13.5px; }
.s1 { width: 320px; margin-right: 5px; }
.s1 svg { width: 24px; height: 24px; margin-left: 12px; margin-right: 8px; }
.s1::before { margin-right: 3px; }
.s1 b { margin: 0 0 0 6px; }
.s1 .info { margin: 0 5px 0 9px; }
.s1 span { letter-spacing: .2px; white-space: nowrap; }
.s2 { width: 1056px; margin-right: 5px; color: #17472b; }
.s2 span { margin-left: 6px; letter-spacing: -.3px; white-space: nowrap; }
.s3 { flex: 1; }

.taskbar { display: flex; justify-content: space-between; background: linear-gradient(90deg, #50132f 0, #54122f 16%, #651244 23%, #621448 35%, #54184f 42%, #3c1956 50%, #46194f 55%, #371a5e 63%, #361a66 72%, #31164e 88%, #2f1548 100%); color: #f2eaf2; }
.apps { display: flex; }
.apps i { width: 62px; display: flex; align-items: center; justify-content: center; position: relative; }
.apps i svg { width: 20px; height: 20px; }
.apps i .w30 { width: 30px; height: 30px; }
.apps i .w28 { width: 28px; height: 28px; }
.run::after { content: ""; position: absolute; left: 6px; right: 5px; bottom: 0; height: 3px; background: #b86fae; }
.cap { background: linear-gradient(90deg, transparent 7px, #a06a42 7px 24px, #752a63 24px 58px, transparent 58px); }
.cap::after { background: #ffee00; }
.now { background: linear-gradient(90deg, transparent 3px, #720868 3px 59px, #4a0850 59px); }
.now::after { left: 3px; right: 0; }
.tray { display: flex; align-items: center; width: 940px; border-right: 1px solid #a99bb5; margin-right: 4px; padding-left: 5px; }
.tray i { width: 30px; display: flex; justify-content: center; flex: none; }
.tray i svg { width: 20px; height: 20px; }
.lbl { color: #d9cfe0; width: 85px; }
.t2 { width: 14px; text-align: center; }
.chev { width: 16px; text-align: center; font-size: 18px; line-height: 18px; margin-bottom: 30px; }
.battery { width: 62px; height: 25px; margin-left: 9px; margin-right: 1px; border: 3px solid #fff; background: linear-gradient(90deg, #1b9a4a 60%, #000 60%); font-size: 16px; line-height: 18px; text-align: center; }
.tray .plug { width: 28px; }
.tray .lav { width: 20px; height: 20px; margin: 0 5px; font: 700 16px/20px "Liberation Sans", sans-serif; letter-spacing: -2px; align-items: center; }
.lav small { font-size: 8.5px; letter-spacing: -.5px; margin-left: 1px; }
.lav.a { background: #e4e4e4; color: #222; } .lav.b { background: #1c50d0; } .lav.c { background: #c03018; }
.tray .pen { width: 40px; }
.tray .kbd { width: 40px; }
.tray .kbd svg { width: 30px; height: 18px; }
.eng { margin-left: 8px; letter-spacing: -.2px; }
.clock { display: flex; flex-direction: column; align-items: center; width: 84px; margin-left: 14px; line-height: 23px; letter-spacing: -.1px; white-space: nowrap; }
.tray .note { width: 62px; }

.scope { position: absolute; left: 106px; top: 486px; width: 689px; height: 456px; background: #fff; box-shadow: 2px 5px 16px rgba(0,0,0,.5); }
.scopetitle { height: 32px; background: #830074; color: #f8eef6; display: flex; align-items: center; justify-content: space-between; padding: 0 1px 0 3px; }
.scopetitle span { font-size: 15px; letter-spacing: -.12px; }
.scopetitle button { width: 25px; height: 25px; margin-bottom: 2px; padding: 0; border: 0; background: #c9504f; display: grid; place-items: center; }
.scopetitle svg { width: 8px; height: 8px; }
.scopebody { display: flex; border-bottom: 1px solid #000; background: #000; height: 424px; }
.display { width: 406px; }
#trace { width: 406px; height: 407px; }
.display .hscroll { height: 15px; margin-top: 1px; padding: 0 6px 0 7px; }
.display .thumb { width: 366px; margin: 0; background: #cdcdcd; }
.modules { display: grid; grid-template-columns: 93px 93px 93px; grid-template-rows: 211px 211px; gap: 1px; margin-left: 1px; background: #000; }
.module { background: #a6a6a6; border-left: 1px solid #eee; }
.module h2 { margin: 0; padding-right: 3px; height: 26px; border-bottom: 1px solid #000; border-top: 1px solid #eee; font: 700 12.5px/28px "Liberation Sans", sans-serif; letter-spacing: -.4px; text-align: center; }
.module svg { width: 92px; height: 185px; }
svg text { white-space: pre; }
```
FILE: app.js
```js
const SANS = 'Liberation Sans, sans-serif';

// SVG text with an optional fixed advance width
function text(x, y, s, size, o = {}) {
  return `<text x="${x}" y="${y}" font-family="${SANS}" font-size="${size}"` +
    (o.w ? ` textLength="${o.w}" lengthAdjust="spacingAndGlyphs"` : '') +
    (o.bold ? ' font-weight="700"' : '') +
    ` text-anchor="${o.anchor || 'start'}" fill="${o.fill || '#111'}">${s}</text>`;
}
const line = (d, c, w = 3) => `<path d="${d}" fill="none" stroke="${c}" stroke-width="${w}"/>`;
const rect = (x, y, w, h, fill, stroke = 'none', sw = 1) =>
  `<rect x="${x}" y="${y}" width="${w}" height="${h}" fill="${fill}" stroke="${stroke}" stroke-width="${sw}"/>`;

/* ---------- schematic sheet ---------- */
const MAROON = '#800000', BODY = '#c8c8a8', NAVY = '#000080', ORANGE = '#d58a52', GREEN = '#60a360';
const PITCH = 17.8, X0 = 189.5, Y0 = 208.5;

function arrow(x, y, dir, c) {
  const d = { l: 'M10 -8L1 0L10 8', r: 'M-10 -8L-1 0L-10 8', u: 'M-8 10L0 1L8 10', d: 'M-8 -10L0 -1L8 -10' }[dir];
  return `<path transform="translate(${x} ${y})" d="${d}" fill="none" stroke="${c}" stroke-width="3"/>`;
}

// grid points, snapped to whole pixels
function gridDots() {
  let d = '';
  for (let r = -4; r <= 44; r++) {
    for (let c = -1; c <= 96; c++) {
      if (c < 0 && r < 29) continue;
      d += `M${Math.floor(X0 + PITCH * c)} ${Math.floor(Y0 + PITCH * r)}h1v1h-1z`;
    }
  }
  return `<path d="${d}" fill="#000"/>`;
}

function drawSheet() {
  let s = gridDots();

  // sheet border and zone marks
  s += line('M171 130V722', NAVY, 4) + line('M1914.500 130V722', NAVY, 2);
  s += line('M163 222H171M163 343.500H171M163 464H171', NAVY);
  s += text(159, 167, '5', 16, { fill: NAVY }) + text(158, 290, '6', 16, { fill: NAVY }) + text(158, 407, '7', 16, { fill: NAVY });
  [['E', 951], ['F', 1125], ['G', 1300], ['H', 1474], ['J', 1650], ['K', 1823]].forEach(([c, x]) => s += text(x, 721, c, 15.5, { fill: '#101080' }));
  s += rect(1292.5, 560, 622, 146, '#fff', NAVY, 3);
  s += line('M171 706.500H1916', NAVY, 3) + line('M171 722.500H1916', NAVY, 4.500);
  s += line('M869.500 706V722M1043.500 706V722M1218 706V722M1392.500 706V722M1567.500 706V722M1741.500 560V722', NAVY, 2.5);

  // title block
  const n = (x, y, t, size, w, fill = NAVY, bold = true) => s += text(x, y, t, size, { w, bold, fill });
  n(1301.6, 581.7, 'FILE NAME:', 15, 85);
  n(1300, 622, 'DESIGN TITLE:', 15, 107);
  n(1302, 659, 'PATH:', 15, 43);
  n(1302, 693, 'BY:', 15, 24);
  n(1340.5, 693, '@AUTHOR', 15, 78);
  n(1622, 694, 'REV:', 15, 34.5);
  n(1657.5, 695, '@REV', 16, 52);
  n(1413, 583.5, 'Exp26_LunchBox_HelloDAC_8Bit.pdsprj', 24, 480);
  n(1413, 625.7, 'Exp26_LunchBox_HelloDAC_8Bit.pdsprj', 24, 480);
  n(1412.5, 660, 'D:\\MSP430G2553 Proteus v8.9 Simulation\\MSP430G2553-Pro', 16, 502);
  n(1752.5, 579, 'DATE:', 15, 43);
  n(1753, 611.7, '18-11-2020', 24, 125);
  n(1753, 645, 'PAGE:', 15, 46);
  n(1752, 667, '1', 15); n(1783.5, 667, 'of', 15, 15); n(1824, 667, '1', 15);
  n(1755, 694, 'TIME:', 15, 39);
  n(1801.5, 694, '02:20:16 AM', 15, 86);
  n(1417, 691.7, 'Subhankar Karmakar', 22.5, 212, MAROON, false);

  // ladder network
  const yTop = 226.4, step = 142.35, nx = k => 278.4 + step * k;
  const nodeCol = ['#bd945a', '#c0935a', '#b0985c', '#ba955a', '#aa9a5c', '#b0985a', '#989b5c', '#8f9c5e'];
  s += line(`M242.300 263V${yTop}H278`, '#bf965c') + arrow(256, yTop, 'l', '#bf965c') + arrow(242.3, 249, 'd', '#bf965c');
  const dirTop = ['l', 'r', 'l', 'r', 'l', 'r', 'r'], dirV = ['u', 'u', 'd', 'u', 'd', 'u', 'd', 'd'];
  for (let k = 0; k < 8; k++) {
    const x = nx(k), c = nodeCol[k];
    if (k < 7) {
      const b = 330 + step * k + 1.5;
      s += line(`M${x} ${yTop}H${b - 15}`, c) + line(`M${b + 68} ${yTop}H${nx(k + 1)}`, nodeCol[k + 1]);
      s += line(`M${b - 16.5} ${yTop}H${b}M${b + 54} ${yTop}H${b + 70}`, MAROON);
      s += rect(b, yTop - 7, 54, 14, BODY, MAROON, 3);
      s += arrow(dirTop[k] === 'l' ? x + 12.7 : x + 22.5, yTop, dirTop[k], c);
      s += text(b - 2.5, 213, 'R' + (k + 1), 22.5, { w: 28 }) + text(b - 1, 248, '10K', 15.5, { w: 26.5 });
    }
    s += line(`M${x} ${yTop}V264`, c) + arrow(x, dirV[k] === 'u' ? 239 : 249, dirV[k], c);
    s += `<circle cx="${x}" cy="${yTop}" r="5.500" fill="${c}"/>`;
  }
  s += line(`M${nx(7)} ${yTop}V137.300H1294`, nodeCol[7]) + line('M1294 137.300H1328', MAROON);
  s += rect(1328.5, 120, 160, 34.5, BODY, MAROON, 3) + text(1337.5, 143, 'D', 15, { w: 10 });

  // returns to port 2
  const low = [0, 0, 1, 0, 1, 0, 1, 1], vy = [0, 365, 382, 382, 399, 400, 417, 425];
  const hx = [824, 895, 978, 1038, 1120, 1180, 1263, 1334];
  for (let k = 7; k >= 0; k--) {
    const x = nx(k), y = Y0 + PITCH * (9 + k), c = low[k] ? GREEN : ORANGE;
    s += line(`M${x} 348V${y}H1383`, c);
    s += arrow(hx[k] + (low[k] ? 0 : 1), y, low[k] ? 'r' : 'l', c);
    if (k) s += arrow(x, vy[k], low[k] ? 'd' : 'u', c);
  }
  const vertical = (x, i, lx) => {
    s += line(`M${x} 263V278M${x} 334V349`, MAROON) + rect(x - 7, 279.5, 14, 53, BODY, MAROON, 3);
    s += text(lx - .5, 298.5, 'R' + i, 22.5, { w: i > 9 ? 41 : 29 }) + text(lx, 318, '20.0K', 15.5, { w: 39.5 });
  };
  s += line('M242.300 348V371', GREEN) + line('M242.300 370V386M223 386.500H262M232 395.500H253M239 404.500H246', '#004000');
  vertical(242.3, 8, 188);
  for (let k = 0; k < 8; k++) vertical(nx(k), 9 + k, nx(k) + 17);

  // microcontroller
  s += rect(1417.7, 190.7, 445, 319.5, BODY, MAROON, 3);
  s += text(1416.5, 185, 'U1', 22.5, { w: 27.5 }) + text(1416.5, 525.8, 'MSP430G2553', 14.7, { w: 102 });
  [[0, '31', 'P1.0/TA0CLK/ACLK/A0/CA0', 188, 1], [1, '1', 'P1.1/TA0.0/UCA0RXD/UCA0SOMI/A1/CA1', 285.5, 1], [2, '2', 'P1.2/TA0.1/UCA0TXD/UCA0SIMO/A2/CA2', 285, 1],
   [3, '3', 'P1.3/ADC10CLK/CAOUT/VREF-/VEREF-/A3/CA3', 331.6, 1], [4, '4', 'P1.4/SMCLK/UCB0STE/UCA0CLK/VREF+/VEREF+/A4/CA4/TCK', 436, 1],
   [5, '5', 'P1.5/TA0.0/UCB0CLK/UCA0STE/A5/CA5/TMS', 310.4, 1], [6, '21', 'P1.6/TA0.1/UCB0SOMI/UCB0SCL/A6/CA6/TDI/TCLK', 354, 1], [7, '22', 'P1.7/CAOUT/UCB0SIMO/UCB0SDA/A7/CA7/TDO/TDI', 363, 1],
   [9, '9', 'P2.0/TA1.0', 73.7, 0], [10, '10', 'P2.1/TA1.1', 73.7, 0], [11, '11', 'P2.2/TA1.1', 73.7, 1], [12, '15', 'P2.3/TA1.0', 73.7, 0],
   [13, '16', 'P2.4/TA1.2', 73.7, 1], [14, '17', 'P2.5/TA1.2', 73.7, 0], [15, '26', 'XIN/P2.6/TA0.1', 101.4, 1], [16, '25', 'XOUT/P2.7', 76.5, 1]
  ].forEach(([k, num, name, w, on]) => {
    const y = Y0 + PITCH * k;
    s += line(`M${k > 8 ? 1383 : 1380} ${y}H1417`, MAROON) + rect(1402, y - 14, 7, 8.3, on ? '#4040ff' : '#808080');
    s += text(1400, y - 3.2, num, 14.7, { anchor: 'end' }) + text(1426.2, y + 5.2, name, 14.7, { w });
  });
  [[0, '23', 'RST/NMI/SBWTDIO', 135.3, 1], [1, '24', 'TEST/SBWTCK', 105.5, 1], [2, '29', 'AVCC', 40, 0], [3, '27', 'AVSS', 39, 0],
   [9, '7', 'P3.0/TA0.2', 74, 1], [10, '6', 'P3.1/TA1.0', 74, 1], [11, '12', 'P3.2/TA1.1', 74, 1], [12, '13', 'P3.3/TA1.2', 74, 1],
   [13, '14', 'P3.4/TA0.0', 74, 1], [14, '18', 'P3.5/TA0.1', 74, 1], [15, '19', 'P3.6/TA0.2', 74, 1], [16, '20', 'P3.7/TA1CLK/CAOUT', 146.7, 1]
  ].forEach(([k, num, name, w, sq]) => {
    const y = Y0 + PITCH * k;
    s += line(`M1863 ${y}H1900`, MAROON) + (sq ? rect(1870, y - 14, 7, 8.3, '#808080') : '');
    s += text(1880.5, y - 3.2, num, 14.7) + text(1853.7, y + 5.2, name, 14.7, { w, anchor: 'end' });
  });
  s += line('M1719 200H1748.500', '#111', 1.6);
  s += line('M163 130.500H1916M163.500 130V993M163 992.500H1916M1915.500 130V993', '#666', 1);
  document.getElementById('sheet').innerHTML = s;
}

/* ---------- oscilloscope trace ---------- */
function drawTrace() {
  let s = rect(106, 518, 407, 407, '#a8a8a8') + rect(107, 519, 405, 405, '#000') + rect(108.5, 520.5, 402, 402, '#000', '#ddd', 1);
  let grid = '';
  for (let i = 0; i <= 20; i++) grid += `M${109.5 + 20 * i} 521.500v400M109.500 ${521.5 + 20 * i}h400`;
  s += line(grid, '#004000', 1) + line('M309.500 521V922', '#909090', 1).replace('/>', ' stroke-dasharray="4 3"/>');

  // one ramp period: [offset from reset, y], spikes follow the bit transitions
  const ramp = [[0, 841], [4, 840], [5, 835.5], [6, 839], [10, 836], [11, 838], [15, 836], [20, 834], [21, 829.5], [22, 834.5], [27, 832], [28, 834], [31, 832], [33, 831], [35, 829], [40, 826], [42, 822], [43.5, 815.5],
    [44, 829.5], [49, 827], [52, 824], [53, 820], [54, 823.5], [58, 821.5], [63, 818], [64.5, 809], [66, 818.5], [71, 815], [74, 811], [75, 805], [77, 810], [80, 804], [81, 799], [83, 802], [86, 795], [87, 785], [88.500, 790], [89, 778.500],
    [89.5, 812], [95, 809], [98, 803], [100, 806], [105, 800], [109, 796], [110, 790], [111.500, 799], [115, 798], [119, 792], [120, 786], [122, 789], [124, 783], [125, 786], [128, 777], [129, 779], [132, 770], [133, 758],
    [133.8, 781], [137, 776], [139, 778], [142, 772], [144, 770], [145, 765], [147, 769], [148, 759], [150, 764], [152, 755], [155, 750], [156, 737], [157, 751], [159, 749], [161, 745], [162, 747], [164, 737], [166, 735], [166.500, 723], [168, 727],
    [170, 718], [171, 705], [172, 720], [173.500, 704], [175, 705], [176, 696], [178, 683], [179, 669]];
  const reset = 263.5, pts = [];
  [-178, 0, 178].forEach(o => ramp.forEach(([dx, y]) => {
    const x = reset + o + dx * (178 / 179);
    if (x >= 109 && x <= 472.6) pts.push(`${x.toFixed(1)} ${y}`);
  }));
  s += line('M109.300 835L' + pts.join('L'), '#00ff00', 1.3);
  document.getElementById('trace').innerHTML = s;
}

/* ---------- control modules ---------- */
const GREY = '#333';
const lab = (x, y, t, o = {}) => text(x, y + 3.2, t, o.size || 9.4, { anchor: o.anchor || 'end', fill: o.fill || GREY, w: o.w, bold: o.bold });
const frame = (x, y, w, h) => rect(x + .5, y + .5, w - 1, h - 1, '#a6a6a6', '#000') + line(`M${x + 1.5} ${y + h - 1.5}V${y + 1.500}H${x + w - 1.5}`, '#e8e8e8', 1) + line(`M${x + 1} ${y + h + .5}H${x + w + .5}V${y}`, '#eee', 1);
const button = (y, on) => rect(77.5, y, 14, 14, on ? 'url(#btnOn)' : 'url(#btn)', '#111') + line(`M77.500 ${y + 14}V${y}H91.500`, '#ddd', 1);

function slideV(y, h, ky) {
  let s = frame(77, y, 14.5, h) + line(`M84.500 ${y + 6}V${y + h - 5}`, '#000', 2.5) + rect(79.5, ky, 10, 13.5, '#c4c4c4', '#555');
  for (let i = 2; i < 12; i += 2.5) s += line(`M81.500 ${ky + i}h6`, '#555', 1);
  return s;
}
function slideH(x, y, w, track) {
  let s = frame(x, y, w, 14.5) + line(`M${x + 6} ${y + 7}H${track}`, '#000', 2) + rect(x + 2.5, y + 2.5, 14, 9.5, '#c4c4c4', '#555');
  for (let i = 2.5; i < 14; i += 2.5) s += line(`M${x + 2.5 + i} ${y + 4}v6`, '#555', 1);
  return s;
}
function meter(vals, color) {
  let s = frame(12, 13, 39, 80) + rect(19, 15, 25, 75, 'url(#drumV)');
  for (let y = 17; y < 90; y += 4) s += line(`M40 ${y}h3.500M19.500 ${y}h3`, '#555', .8);
  s += line('M43.500 15V90', '#000', 1);
  vals.forEach((v, i) => s += text(31.3, 34.3 + 20 * i, v, 9.5, { anchor: 'middle' }));
  s += '<path d="M13 46.500l5.500 4.800-5.500 4.800zM50 46.500l-5.500 4.800 5.500 4.800z" fill="#f01010"/>';
  s += `<path d="M6.500 40l3.800 7H7.200v8h3.100l-3.800 7-3.800-7h3.100v-8H2.700z" fill="${color}"/>`;
  return s;
}
function dial(cx, cy, labels, units, value, color, angle) {
  let s = `<path d="M${cx - 43.5} 183V${cy}a43.500 43.500 0 0 1 87 0V183h-25V160h-37v23z" fill="#fff" stroke="#333" stroke-width=".700"/>`;
  s += `<path d="M${cx - 17.5} 183v-22h36v22z" fill="#a6a6a6"/>`;
  s += line(`M${cx + 14} ${cy - 26}L${cx + 21} ${cy - 39}`, '#777', 5) + line(`M${cx + 12} ${cy - 27}L${cx + 19} ${cy - 40}M${cx + 16} ${cy - 25}L${cx + 23} ${cy - 38}`, '#222', .8);
  for (let a = 0; a < 12; a++) {
    const t = (a * 22.5 - 220) * Math.PI / 180;
    s += line(`M${cx + 29 * Math.cos(t)} ${cy + 29 * Math.sin(t)}L${cx + 33.5 * Math.cos(t)} ${cy + 33.5 * Math.sin(t)}`, '#333', 1);
  }
  labels.forEach(([x, y, t]) => s += text(cx + x, cy + y + 2.6, t, 7.6, { anchor: 'middle', fill: '#222' }));
  s += `<circle cx="${cx}" cy="${cy}" r="29.300" fill="url(#knob)" stroke="#333" stroke-width=".800"/><circle cx="${cx}" cy="${cy}" r="15.500" fill="url(#cap)" stroke="#666" stroke-width="1.500"/>`;
  s += `<path transform="rotate(${angle} ${cx} ${cy})" d="M${cx - 27} ${cy}l8.500-5v10z" fill="${color}"/>`;
  s += `<path d="M${cx + 4.5} ${cy + 8}l5.500-5v7.500z" fill="${color}"/>`;
  s += rect(cx - 17, 169.5, 35, 13, '#fff', '#222') + text(cx - 14.5, 180, value, 9.5, { fill: '#101078' });
  s += text(cx - 32, 179, units[0], 10, { anchor: 'middle' }) + text(cx + 32, 179, units[1], 10, { anchor: 'middle' });
  return s;
}
const GAIN = [[.5, -39, '0.2'], [-14.5, -36, '0.5'], [14, -36, '0.1'], [-27, -27, '1'], [-35.5, -13.7, '2'], [-38.5, 0, '5'], [-37, 15, '10'], [-28.5, 27, '20'],
  [28.5, -27, '50'], [36.5, -13.7, '20'], [38.5, 0, '10'], [36.5, 15, '5'], [27.5, 27, '2']];
const TIME = [[-5, -39, '0.5'], [6, -39, '0.2'], [14.500, -34, '0.1'], [26, -27, '50'], [33, -21, '20'], [36.500, -11, '10'], [38.500, 0, '5'], [38, 10.500, '2'], [35.500, 22, '1'], [28, 30, '0.5'],
  [-15, -35, '1'], [-25, -29, '2'], [-32.500, -21, '5'], [-38, -11, '10'], [-39, -1, '20'], [-39, 11, '50'], [-37, 21, '100'], [-28, 30, '200']];

function channel(vals, color, ky, sum, value, angle) {
  let s = lab(30, 6.3, 'Position', { anchor: 'middle' }) + meter(vals, color);
  ['AC', 'DC', 'GND', 'OFF'].forEach((t, i) => s += lab(75.5, 12.5 + 14 * i, t));
  s += slideV(2, 63.5, ky) + lab(76, 73.5, 'Invert') + button(67);
  if (sum) s += lab(75.5, 90, sum) + button(83.5);
  return s + dial(47.3, 138.3, GAIN, ['V', 'mV'], value, color, angle);
}
function trigger() {
  let s = lab(31, 6.3, 'Level', { anchor: 'middle' }) + meter(['-10', '0', '10'], '#f09098');
  s += lab(75, 12.5, 'AC') + lab(75, 26.7, 'DC') + slideV(2, 33.5, 19.3) + slideV(47, 33.5, 49.7);
  s += line('M66 61.500h3.700V51.500h4M66 66.500h3.700V76.500h4', '#333', 1.2);
  s += lab(74.5, 100.7, 'Auto') + lab(75, 116, 'One-Shot') + lab(75, 131.7, 'Cursors') + button(93, 1) + button(109) + button(125);
  s += lab(46.7, 152, 'Source', { anchor: 'middle' });
  [['A', 26.7, '#f4f000'], ['B', 41.3, '#1890e0'], ['C', 55.3, '#e01080'], ['D', 70, '#109848']].forEach(([t, x, c]) => s += lab(x, 163, t, { anchor: 'middle', fill: c, bold: 1, size: 9 }));
  return s + slideH(15, 168, 63.5, 73);
}
function horizontal() {
  let s = lab(46, 9, 'Source', { anchor: 'middle' }) + line('M13 22L22 15.500V22', '#e07818', 1.2);
  [['A', 32.7, '#f4f000'], ['B', 47, '#1890e0'], ['C', 61.7, '#e01080'], ['D', 76, '#109848']].forEach(([t, x, c]) => s += lab(x, 18.5, t, { anchor: 'middle', fill: c, bold: 1, size: 9 }));
  s += slideH(8, 25, 78.5, 81) + lab(46, 47.5, 'Position', { anchor: 'middle' });
  s += frame(8, 54, 79.5, 38.5) + rect(10, 61, 75, 24, 'url(#drumH)');
  for (let x = 13; x < 85; x += 4) s += line(`M${x} 61v3M${x} 81v4`, '#444', .8);
  s += line('M10 85.500H85', '#000', 1);
  ['210', '200', '190'].forEach((v, i) => s += text(26.5 + 20 * i, 75.5, v, 9.5, { anchor: 'middle' }));
  s += '<path d="M42 55.500h9l-4.500 5zM42 91h9l-4.500-5z" fill="#f01010"/>';
  return s + dial(47.5, 137.5, TIME, ['ms', 'µs'], '0.2', '#e07818', -45);
}

function drawModules() {
  const mods = [
    ['Trigger', '#f09aa0', trigger()],
    ['Channel A', '#f8f000', channel(['110', '120', '130'], '#f8f000', 49.5, 'A+B', '5', 0)],
    ['Channel C', '#e01080', channel(['-50', '-40', '-30'], '#e01080', 49.5, 'C+D', '5', 0)],
    ['Horizontal', '#e87818', horizontal()],
    ['Channel B', '#1890e0', channel(['30', '40', '50'], '#1890e0', 49.5, '', '5', 0)],
    ['Channel D', '#00f010', channel(['-130', '-120', '-110'], '#00f010', 19.5, '', '0.5', 70)]
  ];
  document.getElementById('modules').innerHTML = mods.map(([t, c, b]) =>
    `<div class="module"><h2 style="color:${c}">${t}</h2><svg viewBox="1 -1 92 185">${line('M0 -.500H94', '#eee', 1)}${b}</svg></div>`).join('');
}

drawSheet();
drawTrace();
drawModules();
```
